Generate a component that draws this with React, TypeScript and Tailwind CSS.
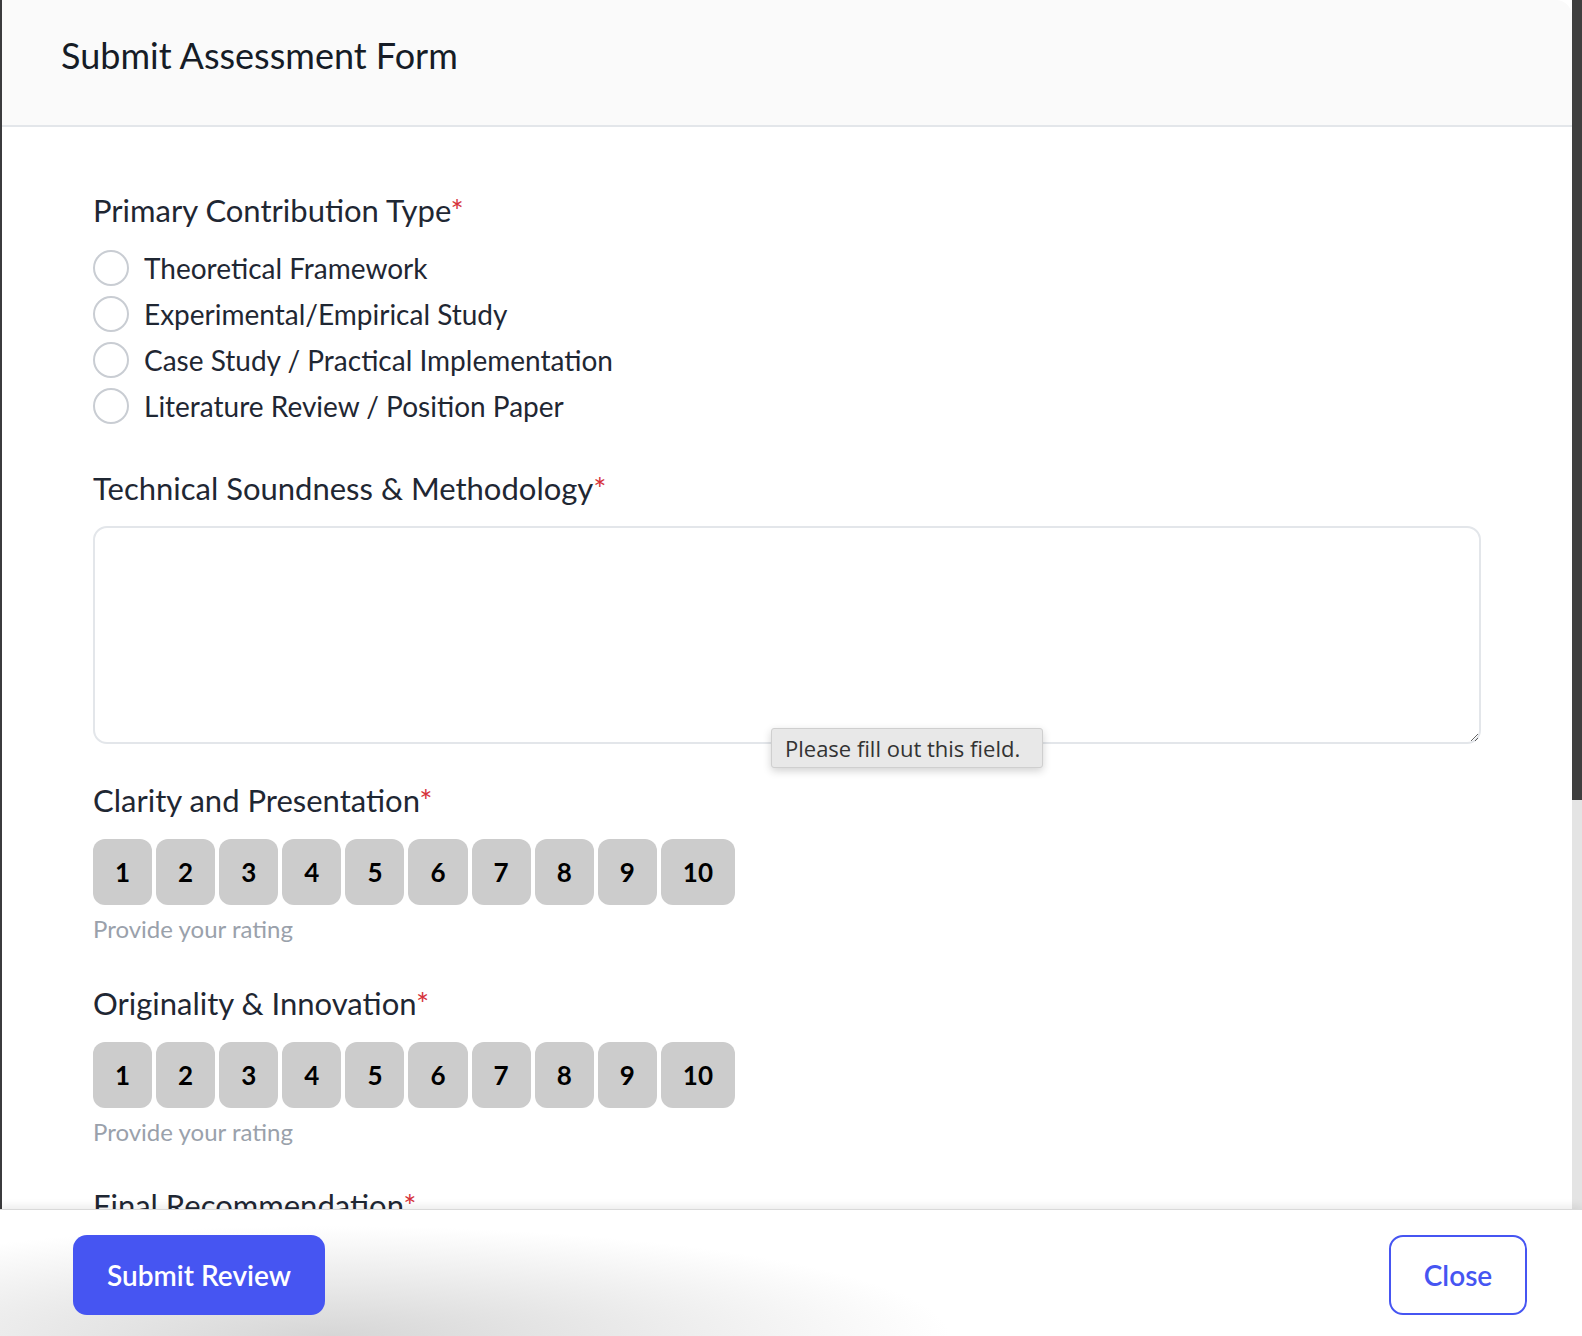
import { useState } from "react";

const FONT = "font-['Lato','Liberation_Sans',sans-serif]";

const CONTRIBUTION_TYPES = [
  "Theoretical Framework",
  "Experimental/Empirical Study",
  "Case Study / Practical Implementation",
  "Literature Review / Position Paper",
];

function FieldLabel({ children }: { children: string }) {
  return (
    <div className="text-[31px] leading-[40px] text-[#1f2733]">
      {children}
      <span className="text-[#d6323a]">*</span>
    </div>
  );
}

function RatingRow({ value, onPick }: { value: number | null; onPick: (n: number) => void }) {
  return (
    <div>
      <div className="mt-[19px] flex gap-[4px]">
        {Array.from({ length: 10 }, (_, i) => i + 1).map((n) => (
          <button
            key={n}
            type="button"
            onClick={() => onPick(n)}
            className={
              "h-[66px] rounded-[12px] px-[22px] text-[26px] font-bold " +
              (value === n ? "bg-[#4655f2] text-white" : "bg-[#cccccc] text-black")
            }
          >
            {n}
          </button>
        ))}
      </div>
      <div className="mt-2 text-[24px] leading-[32px] text-[#9aa1ab]">Provide your rating</div>
    </div>
  );
}

export default function App() {
  const [kind, setKind] = useState<string | null>(null);
  const [clarity, setClarity] = useState<number | null>(null);
  const [originality, setOriginality] = useState<number | null>(null);

  return (
    <div className={`${FONT} flex h-[1336px] w-full flex-col overflow-hidden bg-white`}>
      {/* área con scroll: formulario + barra */}
      <div className="flex min-h-0 flex-1">
        <div className="w-[2px] bg-[#3b3b3d]" />
        <div className="relative flex min-w-0 flex-1 flex-col overflow-hidden">
          <div className="h-[127px] shrink-0 rounded-tr-[16px] border-b-2 border-[#e3e6ea] bg-[#fafafa] px-[59px] pt-[33px]">
            <h2 className="text-[36px] leading-[44px] text-[#161c26]">Submit Assessment Form</h2>
          </div>

          <div className="px-[91px] pt-[63px]">
            <FieldLabel>Primary Contribution Type</FieldLabel>
            <div className="mt-[15px] flex flex-col">
              {CONTRIBUTION_TYPES.map((t) => (
                <label key={t} className="flex h-[46px] cursor-pointer items-center gap-[15px]">
                  <span
                    onClick={() => setKind(t)}
                    className={
                      "h-[36px] w-[36px] rounded-full border-2 " +
                      (kind === t ? "border-[10px] border-[#4655f2]" : "border-[#c9cdd3]")
                    }
                  />
                  <span className="text-[28px] leading-[36px] text-[#1f2733]">{t}</span>
                </label>
              ))}
            </div>

            <div className="mt-[39px]">
              <FieldLabel>Technical Soundness &amp; Methodology</FieldLabel>
              <textarea
                required
                className="mt-[18px] block h-[218px] w-full resize-y rounded-[14px] border-2 border-[#e3e6ea] p-4 text-[24px] outline-none"
              />
            </div>

            <div className="mt-[36px]">
              <FieldLabel>Clarity and Presentation</FieldLabel>
              <RatingRow value={clarity} onPick={setClarity} />
            </div>

            <div className="mt-[38px]">
              <FieldLabel>Originality &amp; Innovation</FieldLabel>
              <RatingRow value={originality} onPick={setOriginality} />
            </div>

            <div className="mt-[37px]">
              <FieldLabel>Final Recommendation</FieldLabel>
            </div>
          </div>

          {/* aviso de validación nativo */}
          <div className="absolute left-[769px] top-[728px] w-[272px] rounded-[3px] border border-[#cfcfcf] bg-[#e8e8e8] px-[13px] py-[6px] font-['Open_Sans',sans-serif] text-[22px] leading-[26px] text-[#333] shadow-[0_3px_8px_rgba(0,0,0,0.18)]">
            Please fill out this field.
          </div>
        </div>
        <div className="flex w-[10px] flex-col bg-[#e4e4e4]">
          <div className="h-[800px] bg-[#3f3f3f]" />
        </div>
      </div>

      <div className="relative flex h-[127px] shrink-0 items-start justify-between border-t border-[#d9d9d9] bg-white pl-[73px] pr-[55px] pt-[25px] shadow-[0_-3px_8px_rgba(0,0,0,0.08)]">
        <div className="pointer-events-none absolute inset-0 bg-[radial-gradient(ellipse_620px_110px_at_330px_100%,#d6d6d6,#ffffff00)]" />
        <button
          type="button"
          className="relative h-[80px] w-[252px] rounded-[14px] bg-[#4655f2] text-[28px] font-semibold text-white"
        >
          Submit Review
        </button>
        <button
          type="button"
          className="relative h-[80px] w-[138px] rounded-[14px] border-2 border-[#4655f2] bg-white text-[28px] font-semibold text-[#4655f2]"
        >
          Close
        </button>
      </div>
    </div>
  );
}
